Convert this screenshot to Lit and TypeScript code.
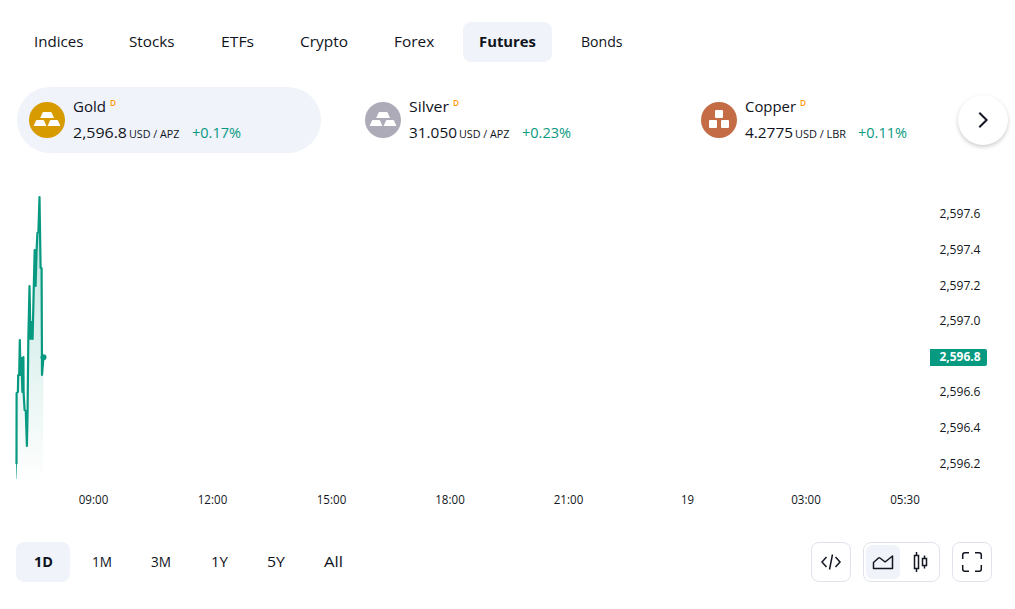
import { LitElement, css, html, svg } from 'lit';
import { customElement, property, state } from 'lit/decorators.js';

interface Fit {
	label: string;
	width: number;
	text: number;
}

interface Quote {
	name: string;
	nameWidth: number;
	price: string;
	priceWidth: number;
	unit: string;
	unitWidth: number;
	change: string;
	icon: 'bars' | 'cubes';
	color: string;
}

const TABS: Fit[] = [
	{ label: 'Indices', width: 82, text: 49.4 },
	{ label: 'Stocks', width: 78, text: 45.6 },
	{ label: 'ETFs', width: 65, text: 33 },
	{ label: 'Crypto', width: 80.8, text: 48 },
	{ label: 'Forex', width: 71.8, text: 40.2 },
	{ label: 'Futures', width: 88.8, text: 57 },
	{ label: 'Bonds', width: 73, text: 41.6 },
];

const RANGES: Fit[] = [
	{ label: '1D', width: 54, text: 19 },
	{ label: '1M', width: 54, text: 20 },
	{ label: '3M', width: 54, text: 20 },
	{ label: '1Y', width: 52, text: 17 },
	{ label: '5Y', width: 52, text: 18 },
	{ label: 'All', width: 52, text: 19 },
];

const QUOTES: Quote[] = [
	{ name: 'Gold', nameWidth: 33, price: '2,596.8', priceWidth: 54, unit: 'USD / APZ', unitWidth: 50.5, change: '+0.17%', icon: 'bars', color: '#d79b00' },
	{ name: 'Silver', nameWidth: 40, price: '31.050', priceWidth: 48, unit: 'USD / APZ', unitWidth: 50.5, change: '+0.23%', icon: 'bars', color: '#adabb8' },
	{ name: 'Copper', nameWidth: 51, price: '4.2775', priceWidth: 48, unit: 'USD / LBR', unitWidth: 51, change: '+0.11%', icon: 'cubes', color: '#c36c46' },
];

const PRICES: [string, number][] = [
	['2,597.6', 213.5],
	['2,597.4', 249.5],
	['2,597.2', 285.5],
	['2,597.0', 320.5],
	['2,596.6', 391.5],
	['2,596.4', 427.5],
	['2,596.2', 463.5],
];

const TIMES: [string, number][] = [
	['09:00', 93.5],
	['12:00', 212.5],
	['15:00', 331.5],
	['18:00', 450],
	['21:00', 568.5],
	['19', 687.5],
	['03:00', 806],
	['05:30', 905],
];

const POINTS = [
	[16.5, 464], [16.6, 393], [17.9, 392], [18.2, 375], [19.2, 375], [19.8, 340], [20.6, 375], [21.4, 358],
	[22.4, 392], [23.4, 357], [23.6, 392], [24.6, 410], [25.8, 411], [26.9, 446], [27.6, 410], [28.3, 340],
	[29.5, 286], [30.5, 339], [31.6, 322], [32.6, 339], [33.8, 286], [34.7, 250], [35.6, 286], [36.6, 250],
	[37.4, 233], [38.4, 232], [39.5, 197], [40.6, 268], [41.6, 268], [42, 375], [43.5, 357],
];

// One line of text, drawn at an exact width
@customElement('fit-text')
class FitText extends LitElement {
	static styles = css`
    :host {
      display: block;
      flex: none;
    }

    svg {
      display: block;
      overflow: visible;
    }

    text {
      fill: currentColor;
    }
  `;

	@property() text = '';
	@property({ type: Number }) width = 0;
	@property({ type: Number }) height = 24;

	render() {
		return html`
      <svg width=${this.width} height=${this.height}>
        <text y=${this.height * 0.72} textLength=${this.width} lengthAdjust="spacingAndGlyphs">${this.text}</text>
      </svg>
    `;
	}
}

@customElement('market-chart')
class MarketChart extends LitElement {
	static styles = css`
    :host {
      display: block;
    }

    svg {
      display: block;
    }

    text {
      font-size: 12px;
      fill: #131722;
    }

    .line {
      fill: none;
      stroke: #089981;
      stroke-width: 2.2;
      stroke-linejoin: round;
    }

    .area {
      fill: url(#fade);
    }

    .mark {
      fill: #089981;
    }

    .current {
      fill: #ffffff;
      font-weight: 700;
    }
  `;

	render() {
		const line = POINTS.map((p) => p.join(',')).join(' ');
		return html`
      <svg width="1015" height="338" viewBox="0 180 1015 338">
        <defs>
          <linearGradient id="fade" gradientUnits="userSpaceOnUse" x1="0" y1="197" x2="0" y2="482">
            <stop offset="0" stop-color="#089981" stop-opacity="0.28" />
            <stop offset="1" stop-color="#089981" stop-opacity="0" />
          </linearGradient>
          <linearGradient id="tail" gradientUnits="userSpaceOnUse" x1="0" y1="462" x2="0" y2="480">
            <stop offset="0" stop-color="#089981" />
            <stop offset="1" stop-color="#089981" stop-opacity="0.3" />
          </linearGradient>
        </defs>
        <polygon class="area" points="16,482 ${line} 43,482" />
        <polyline class="line" points=${line} />
        <rect x="16" y="463" width="1" height="16" fill="url(#tail)" />
        <circle class="mark" cx="43.5" cy="357.2" r="3" />
        ${PRICES.map(([label, y]) => svg`<text x="939.5" y=${y + 4.5} textLength="41" lengthAdjust="spacingAndGlyphs">${label}</text>`)}
        <path class="mark" d="M930 349h55a2 2 0 0 1 2 2v13a2 2 0 0 1-2 2h-55z" />
        <text class="current" x="939.5" y="361" textLength="41" lengthAdjust="spacingAndGlyphs">2,596.8</text>
        ${TIMES.map(([label, x]) => {
			const width = label.length > 2 ? 29.5 : 13;
			return svg`<text x=${x - width / 2} y="504" textLength=${width} lengthAdjust="spacingAndGlyphs">${label}</text>`;
		})}
      </svg>
    `;
	}
}

@customElement('app-root')
class AppRoot extends LitElement {
	static styles = css`
    :host {
      display: block;
      box-sizing: border-box;
      width: 1015px;
      height: 609px;
      padding-top: 22px;
      overflow: hidden;
      background: #ffffff;
      color: #0f131c;
      font-family: "Open Sans", "Noto Sans", sans-serif;
      font-size: 15px;
    }

    button {
      display: flex;
      align-items: center;
      justify-content: center;
      box-sizing: border-box;
      flex: none;
      height: 40px;
      padding: 0;
      border: none;
      border-radius: 8px;
      background: none;
      color: inherit;
      font: inherit;
      cursor: pointer;
    }

    .active {
      background: #f0f3fa;
      font-weight: 700;
    }

    .tabs {
      display: flex;
      gap: 13.6px;
      padding-left: 17.6px;
    }

    .quotes {
      display: flex;
      align-items: center;
      height: 66px;
      margin-top: 25px;
      padding-left: 17px;
      gap: 32px;
    }

    .quote {
      display: flex;
      align-items: center;
      box-sizing: border-box;
      flex: none;
      width: 304px;
      height: 66px;
      padding: 2px 0 0 12px;
      gap: 8px;
      border-radius: 33px;
    }

    .quote.selected {
      background: #f0f3fa;
    }

    .quote:last-of-type {
      width: 237px;
    }

    .logo {
      margin-top: -2px;
    }

    .row {
      display: flex;
      height: 26px;
    }

    .delay {
      margin: 1px 0 0 4px;
      color: #ff9800;
      font-size: 9px;
      font-weight: 600;
    }

    .unit {
      margin: 1px 12px 0 2px;
      font-size: 11px;
    }

    .change {
      color: #089981;
    }

    .next {
      width: 50px;
      height: 50px;
      border-radius: 50%;
      background: #ffffff;
      box-shadow: 0 2px 4px rgba(0, 0, 0, 0.2);
    }

    market-chart {
      margin-top: 27px;
    }

    .footer {
      display: flex;
      margin-top: 24px;
      padding: 0 23px 0 16px;
      gap: 12px;
    }

    .ranges {
      display: flex;
      flex: 1;
      gap: 5px;
    }

    .tool,
    .group {
      box-sizing: border-box;
      border: 1px solid #e0e3eb;
      border-radius: 8px;
    }

    .tool {
      width: 40px;
    }

    .group {
      display: flex;
      width: 77px;
      height: 40px;
      padding: 2px;
      gap: 3px;
    }

    .group button {
      width: 34px;
      height: 34px;
      border-radius: 6px;
    }

    .icon {
      display: block;
      fill: none;
      stroke: #131722;
      stroke-width: 1.5;
    }
  `;

	@state() tab = 'Futures';
	@state() range = '1D';
	@state() quote = 'Gold';

	renderButton(item: Fit, active: boolean, pick: () => void) {
		return html`
      <button class=${active ? 'active' : ''} style="width: ${item.width}px" @click=${pick}>
        <fit-text text=${item.label} width=${item.text}></fit-text>
      </button>
    `;
	}

	renderLogo(quote: Quote) {
		const shape = quote.icon === 'bars'
			? svg`<path fill="#fff" d="M14.600 10h7q.7 0 1 .6L25 16H11.200l2.400-5.400q.3-.6 1-.6zM8 18h6q.7 0 1 .6L17.400 24H4.600L7 18.600q.3-.6 1-.6zM22 18h6q.7 0 1 .6L31.400 24H18.600L21 18.600q.3-.6 1-.6z" />`
			: svg`<path fill="#fff" d="M15 8h6q1 0 1 1v6q0 1-1 1h-6q-1 0-1-1V9q0-1 1-1zM9 18h6q1 0 1 1v6q0 1-1 1H9q-1 0-1-1v-6q0-1 1-1zM21 18h6q1 0 1 1v6q0 1-1 1h-6q-1 0-1-1v-6q0-1 1-1z" />`;
		return html`
      <svg class="logo" width="36" height="36" viewBox="0 0 36 36">
        <circle cx="18" cy="18" r="18" fill=${quote.color} />
        ${shape}
      </svg>
    `;
	}

	renderQuote(quote: Quote) {
		return html`
      <div class="quote ${quote.name === this.quote ? 'selected' : ''}" @click=${() => { this.quote = quote.name; }}>
        ${this.renderLogo(quote)}
        <div>
          <div class="row">
            <fit-text text=${quote.name} width=${quote.nameWidth}></fit-text>
            <fit-text class="delay" text="D" width="6" height="14"></fit-text>
          </div>
          <div class="row">
            <fit-text text=${quote.price} width=${quote.priceWidth}></fit-text>
            <fit-text class="unit" text=${quote.unit} width=${quote.unitWidth} height="22"></fit-text>
            <fit-text class="change" text=${quote.change} width="49"></fit-text>
          </div>
        </div>
      </div>
    `;
	}

	render() {
		return html`
      <div class="tabs">
        ${TABS.map((item) => this.renderButton(item, item.label === this.tab, () => { this.tab = item.label; }))}
      </div>
      <div class="quotes">
        ${QUOTES.map((quote) => this.renderQuote(quote))}
        <button class="next" aria-label="Next">
          <svg class="icon" width="18" height="18" viewBox="0 0 18 18"><path stroke-width="2" d="M5.300 1.700 12.600 9l-7.300 7.300" /></svg>
        </button>
      </div>
      <market-chart></market-chart>
      <div class="footer">
        <div class="ranges">
          ${RANGES.map((item) => this.renderButton(item, item.label === this.range, () => { this.range = item.label; }))}
        </div>
        <button class="tool" aria-label="Embed">
          <svg class="icon" width="28" height="28" viewBox="0 0 28 28"><path d="M9.500 9 5 14l4.500 5M18.500 9l4.500 5-4.500 5M15.500 6.500l-3 15" /></svg>
        </button>
        <div class="group">
          <button class="active" aria-label="Area">
            <svg class="icon" width="28" height="28" viewBox="0 0 28 28"><path stroke-linejoin="round" d="M4.500 20.500v-6l5-4.500q.7-.5 1.400 0l4.600 3.500q.6.300 1.200 0L23.500 8v12.500z" /></svg>
          </button>
          <button aria-label="Candles">
            <svg class="icon" width="28" height="28" viewBox="0 0 28 28"><path d="M8.500 7.500h4v13h-4zM10.500 4v3.500M10.500 20.500V24M16.500 10.500h4v7h-4zM18.500 7.500v3M18.500 17.500v3" /></svg>
          </button>
        </div>
        <button class="tool" aria-label="Fullscreen">
          <svg class="icon" width="28" height="28" viewBox="0 0 28 28"><path d="M4.700 11V7q0-2.300 2.300-2.300h4M17 4.700h4q2.300 0 2.300 2.300v4M23.300 17v4q0 2.300-2.300 2.300h-4M11 23.300H7q-2.300 0-2.300-2.300v-4" /></svg>
        </button>
      </div>
    `;
	}
}
